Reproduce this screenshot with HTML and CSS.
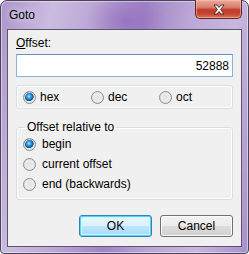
FILE: index.html
```html
<!DOCTYPE html>
<html lang="en">
<head>
  <meta charset="UTF-8" />
  <title>Goto</title>
  <link rel="stylesheet" href="styles.css">
</head>
<body>

  <div class="window">
    <div class="titlebar">
      <span class="title">Goto</span>
      <button class="close-btn" type="button">
        <svg width="14" height="11" viewBox="0 0 14 11">
          <path d="M2 1 L5 1 L7 3.5 L9 1 L12 1 L8.6 5.5 L12 10 L9 10 L7 7.5 L5 10 L2 10 L5.4 5.5 Z"
                fill="#fff" stroke="#4a2020" stroke-width="0.9" stroke-linejoin="round" />
        </svg>
      </button>
    </div>

    <div class="client">
      <label class="field-label" for="offset"><u>O</u>ffset:</label>
      <input class="offset-input" id="offset" type="text" value="52888" />

      <div class="base-box">
        <label class="radio"><input type="radio" name="base" checked /> hex</label>
        <label class="radio"><input type="radio" name="base" /> dec</label>
        <label class="radio"><input type="radio" name="base" /> oct</label>
      </div>

      <fieldset class="group">
        <legend>Offset relative to</legend>
        <label class="radio"><input type="radio" name="rel" checked /> begin</label>
        <label class="radio"><input type="radio" name="rel" /> current offset</label>
        <label class="radio"><input type="radio" name="rel" /> end (backwards)</label>
      </fieldset>

      <div class="buttons">
        <button class="btn btn-default" type="button">OK</button>
        <button class="btn" type="button">Cancel</button>
      </div>
    </div>
  </div>

</body>
</html>
```

FILE: styles.css
```css
body {
  margin: 0;
  font-family: "Liberation Sans", Arial, sans-serif;
  font-size: 12px;
  color: #000;
}

.window {
  width: 249px;
  height: 254px;
  box-sizing: border-box;
  border: 1px solid #4b4356;
  border-radius: 7px 7px 4px 4px;
  background:
    radial-gradient(ellipse 40px 30px at 125px 20px, rgba(140, 100, 185, 0.6), transparent),
    linear-gradient(100deg, #ad95cc 0%, #cbbce0 18%, #b9a3d4 35%, #a084c6 50%, #bba7d6 66%, #c7b7de 82%, #a98fcb 100%);
  box-shadow: inset 0 0 0 1px rgba(255, 255, 255, 0.45);
  padding: 0 6px 7px 6px;
}

.titlebar {
  height: 28px;
  display: flex;
  align-items: flex-start;
  justify-content: space-between;
}

.title {
  padding: 7px 0 0 2px;
  font-size: 12px;
  color: #000;
  text-shadow: 0 0 6px rgba(255, 255, 255, 0.9);
}

.close-btn {
  width: 47px;
  height: 19px;
  margin: -1px 0 0 0;
  padding: 0;
  border: 1px solid #5b2a24;
  border-top: none;
  border-radius: 0 0 5px 5px;
  background: linear-gradient(#e9a99c 0%, #d9806c 40%, #c0392a 55%, #c84a34 80%, #dd7a5a 100%);
  box-shadow: inset 0 0 0 1px rgba(255, 200, 190, 0.5);
  display: flex;
  align-items: center;
  justify-content: center;
}

.client {
  height: 218px;
  box-sizing: border-box;
  border: 1px solid #5d566a;
  background: #f0f0f0;
  padding: 5px 8px 0 8px;
  display: flex;
  flex-direction: column;
}

.field-label {
  line-height: 15px;
  height: 15px;
  padding-top: 1px;
}

.offset-input {
  margin-top: 3px;
  height: 23px;
  box-sizing: border-box;
  border: 1px solid #8eb3d6;
  border-top-color: #5e94c6;
  padding: 0 3px;
  text-align: right;
  font-family: inherit;
  font-size: 12px;
  outline: none;
  background: #fff;
}

.base-box {
  margin-top: 8px;
  height: 24px;
  box-sizing: border-box;
  border: 1px solid #d5dfe5;
  border-radius: 3px;
  box-shadow: inset 0 0 0 1px #fff;
  display: flex;
  align-items: center;
  padding-left: 6px;
}

.base-box .radio {
  width: 68px;
}

.radio {
  display: flex;
  align-items: center;
  gap: 4px;
  line-height: 15px;
}

.radio input {
  appearance: none;
  margin: 0;
  width: 13px;
  height: 13px;
  border-radius: 50%;
  border: 1px solid #8e8f8f;
  background: radial-gradient(circle at 50% 50%, #e6e6e6 30%, #f7f7f7 75%);
  box-sizing: border-box;
  box-shadow: inset 0 0 0 1px #dedede;
}

.radio input:checked {
  background:
    radial-gradient(circle at 45% 40%, #b8e6ff 0, #35a0e0 2px, #0b5b9a 4px, #0b5b9a 4.5px, transparent 5px),
    radial-gradient(circle at 50% 50%, #e6e6e6 30%, #f7f7f7 75%);
}

.group {
  margin: 11px 0 0 0;
  padding: 2px 0 0 6px;
  height: 80px;
  box-sizing: border-box;
  border: 1px solid #d5dfe5;
  border-radius: 3px;
  box-shadow: inset 0 0 0 1px #fff;
  display: flex;
  flex-direction: column;
  gap: 5px;
}

.group legend {
  padding: 0 2px;
  margin-left: 2px;
  line-height: 15px;
}

.group .radio {
  gap: 6px;
}

.buttons {
  margin-top: 15px;
  display: flex;
  justify-content: flex-end;
  gap: 8px;
}

.btn {
  width: 73px;
  height: 22px;
  padding: 0;
  font-family: inherit;
  font-size: 12px;
  color: #000;
  border: 1px solid #707070;
  border-radius: 3px;
  background: linear-gradient(#f2f2f2 0%, #ebebeb 50%, #dddddd 50%, #cfcfcf 100%);
  box-shadow: inset 0 0 0 1px #fcfcfc;
}

.btn-default {
  border-color: #3c7fb1;
  background: linear-gradient(#eaf6fd 0%, #d9f0fc 50%, #bee6fd 50%, #a7d9f5 100%);
  box-shadow: inset 0 0 0 1px #48d8fb, inset 0 0 0 2px #d4f1fc;
}
```
